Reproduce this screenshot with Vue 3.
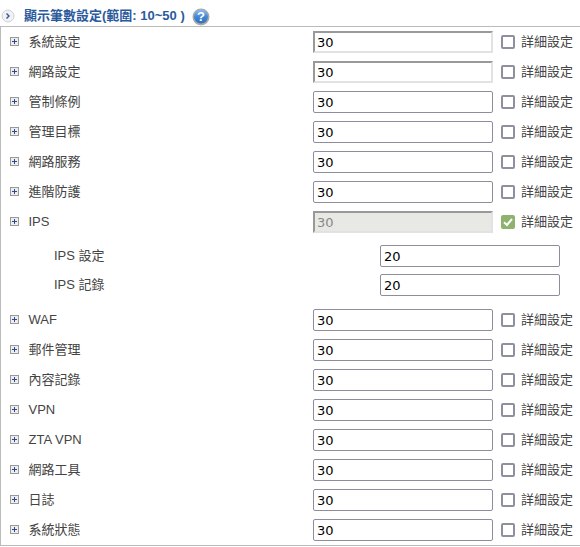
<script setup>
const before = ['系統設定', '網路設定', '管制條例', '管理目標', '網路服務', '進階防護']
const after = ['WAF', '郵件管理', '內容記錄', 'VPN', 'ZTA VPN', '網路工具', '日誌', '系統狀態']
const subs = ['IPS 設定', 'IPS 記錄']
</script>

<template>
  <div class="panel">
    <div class="head">
      <svg class="arrow" width="14" height="14" viewBox="0 0 14 14">
        <circle cx="7" cy="7" r="6" fill="#f2f2f2" stroke="#d0d0d0" />
        <path d="M5.5 4.5 8 7 5.5 9.5" fill="none" stroke="#2b5a9c" stroke-width="1.4" />
      </svg>
      <span class="title">顯示筆數設定(範圍: 10~50 )</span>
      <svg class="help" width="18" height="18" viewBox="0 0 18 18">
        <defs>
          <linearGradient id="helpFill" x1="0" y1="0" x2="0" y2="1">
            <stop offset="0" stop-color="#8fbdf0" />
            <stop offset="0.55" stop-color="#3f84d4" />
            <stop offset="1" stop-color="#2f6fc0" />
          </linearGradient>
        </defs>
        <circle cx="9" cy="9" r="8.5" fill="#a8a8a8" />
        <circle cx="9" cy="8.6" r="7" fill="url(#helpFill)" />
        <text x="9" y="13" text-anchor="middle" class="help-mark">?</text>
      </svg>
    </div>

    <div class="body">
      <div v-for="name in before" :key="name" class="row">
        <span class="plus"></span>
        <span class="name">{{ name }}</span>
        <input class="num" :class="{ inset: name === '系統設定' || name === '網路設定' }" value="30" />
        <span class="check"></span>
        <span class="detail">詳細設定</span>
      </div>

      <div class="row">
        <span class="plus"></span>
        <span class="name">IPS</span>
        <input class="num inset off" value="30" disabled />
        <span class="check on">
          <svg width="10" height="10" viewBox="0 0 10 10">
            <path d="M1 5.2 4 8 9 2" fill="none" stroke="#fff" stroke-width="2" />
          </svg>
        </span>
        <span class="detail">詳細設定</span>
      </div>

      <div class="subs">
        <div v-for="name in subs" :key="name" class="sub">
          <span class="sub-name">{{ name }}</span>
          <input class="num" value="20" />
        </div>
      </div>

      <div v-for="name in after" :key="name" class="row">
        <span class="plus"></span>
        <span class="name">{{ name }}</span>
        <input class="num" value="30" />
        <span class="check"></span>
        <span class="detail">詳細設定</span>
      </div>
    </div>
  </div>
</template>

<style scoped>
.panel {
  width: 580px;
  height: 546px;
  box-sizing: border-box;
  font-family: "Liberation Sans", "Noto Sans CJK TC", sans-serif;
  font-size: 13px;
  line-height: 14px;
  color: #444;
}

.head {
  display: flex;
  align-items: center;
  height: 27px;
  padding-left: 1px;
  box-sizing: border-box;
  border-bottom: 1px solid #bbb;
}

.arrow {
  margin-top: 6px;
}

.title {
  margin-left: 9px;
  margin-top: 5px;
  font-size: 13px;
  font-weight: bold;
  color: #2b5a9c;
}

.help {
  margin-left: 7px;
  margin-top: 7px;
}

.help-mark {
  font-size: 13px;
  font-weight: bold;
  fill: #fff;
}

.body {
  height: 519px;
  box-sizing: border-box;
  border-left: 1px solid #bbb;
  border-bottom: 1px solid #bbb;
}

.row {
  display: flex;
  align-items: center;
  height: 30px;
  padding-left: 9px;
}

.plus {
  position: relative;
  width: 7px;
  height: 7px;
  margin-bottom: 1px;
  border: 1px solid #999;
  background: #eee;
  flex: none;
}

.plus::before,
.plus::after {
  content: "";
  position: absolute;
  background: #2b4a8c;
}

.plus::before {
  left: 1px;
  right: 1px;
  top: 3px;
  height: 1px;
}

.plus::after {
  top: 1px;
  bottom: 1px;
  left: 3px;
  width: 1px;
}

.name {
  width: 284.5px;
  margin-left: 9.5px;
  margin-bottom: 1px;
  flex: none;
}

.num {
  width: 180px;
  height: 22px;
  box-sizing: border-box;
  padding: 0 3px;
  margin: 0;
  border: 1px solid #8f8c9e;
  border-radius: 2px;
  background: #fff;
  font-family: "DejaVu Sans", sans-serif;
  font-size: 13px;
  color: #000;
  flex: none;
}

.inset {
  border: 2px solid;
  border-color: #999 #e2e2e2 #e2e2e2 #999;
  border-radius: 0;
  padding: 0 2px;
}

.off {
  background: #e8e8e4;
  color: #888;
}

.check {
  display: flex;
  align-items: center;
  justify-content: center;
  width: 14px;
  height: 14px;
  box-sizing: border-box;
  margin-left: 8px;
  border: 2px solid #918e9e;
  border-radius: 2px;
  flex: none;
}

.check.on {
  border: none;
  background: #8fb36f;
}

.detail {
  margin-left: 6px;
  white-space: nowrap;
}

.subs {
  display: flex;
  flex-direction: column;
  gap: 7px;
  padding: 8px 0 9px 0;
}

.sub {
  display: flex;
  align-items: center;
  height: 22px;
  padding-left: 53px;
}

.sub-name {
  width: 326px;
  flex: none;
}
</style>
